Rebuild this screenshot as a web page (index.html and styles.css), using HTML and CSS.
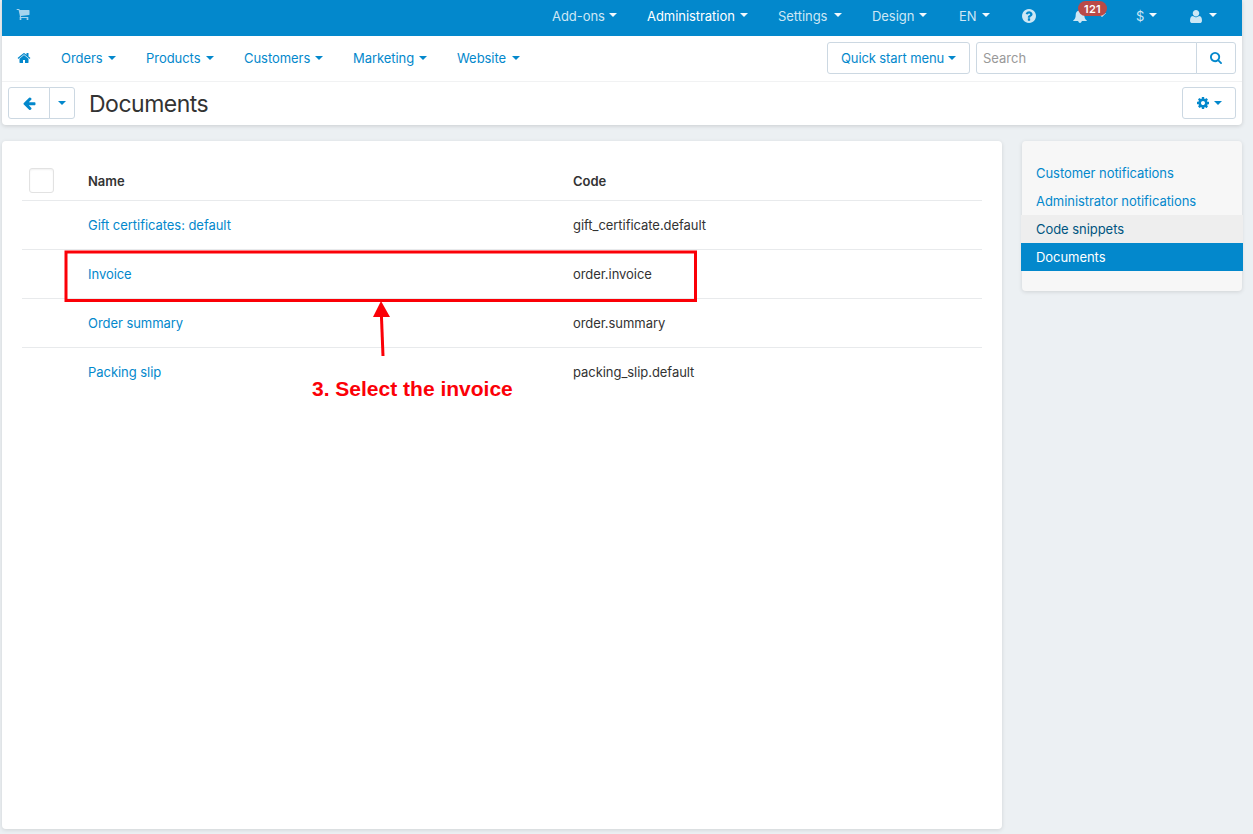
FILE: index.html
```html
<!DOCTYPE html>
<html lang="en">
<head>
    <meta charset="UTF-8">
    <meta name="viewport" content="width=device-width, initial-scale=1.0">
    <title>Documents</title>
    <link rel="stylesheet" href="styles.css">
</head>
<body>
    <header class="header">
        <div class="topbar">
            <a class="cart"><svg class="icon" viewBox="0 0 1792 1792"><path d="M704 1536q0 52-38 90t-90 38-90-38-38-90 38-90 90-38 90 38 38 90zm896 0q0 52-38 90t-90 38-90-38-38-90 38-90 90-38 90 38 38 90zm128-1088v512q0 24-16.5 42.5t-40.5 21.5l-1044 122q13 60 13 70 0 16-24 64h920q26 0 45 19t19 45-19 45-45 19h-1024q-26 0-45-19t-19-45q0-11 8-31.5t16-36 21.5-40 15.5-29.5l-177-823h-204q-26 0-45-19t-19-45 19-45 45-19h256q16 0 28.5 6.5t19.5 15.5 13 24.5 8 26 5.5 29.5 4.5 26h1201q26 0 45 19t19 45z"/></svg></a>
            <ul class="top-menu">
                <li class="w-addons">Add-ons <b class="caret"></b></li>
                <li class="w-admin active">Administration <b class="caret"></b></li>
                <li class="w-settings">Settings <b class="caret"></b></li>
                <li class="w-design">Design <b class="caret"></b></li>
                <li class="w-lang">EN <b class="caret"></b></li>
                <li class="w-help"><svg class="icon" viewBox="128 128 1536 1536"><path d="M1024 1376v-192q0-14-9-23t-23-9h-192q-14 0-23 9t-9 23v192q0 14 9 23t23 9h192q14 0 23-9t9-23zm256-672q0-88-55.5-163t-138.5-116-170-41q-243 0-371 213-15 24 8 42l132 100q7 6 19 6 16 0 25-12 53-68 86-92 34-24 86-24 48 0 85.5 26t37.5 59q0 38-20 61t-68 45q-63 28-115.5 86.5t-52.5 125.5v36q0 14 9 23t23 9h192q14 0 23-9t9-23q0-19 21.5-49.5t54.5-49.5q32-18 49-28.5t46-35 44.5-48 28-60.5 12.5-81zm384 192q0 209-103 385.5t-279.5 279.5-385.5 103-385.5-103-279.5-279.5-103-385.5 103-385.5 279.5-279.5 385.5-103 385.5 103 279.5 279.5 103 385.5z"/></svg></li>
                <li class="w-bell"><svg class="icon" viewBox="0 0 14 14"><path d="M7 0.3c.6 0 .9.4.9.9v.4c2.300.4 3.400 2.200 3.400 4.200 0 2.900.8 4.400 2.500 5.600v.7H.2v-.7C1.900 10.200 2.700 8.700 2.700 5.800c0-2 1.100-3.800 3.400-4.200v-.4c0-.5.3-.9.9-.9zM5.200 12.100h3.600c-.1 1.200-.8 1.800-1.800 1.800s-1.700-.6-1.800-1.800z"/></svg><b class="caret"></b><span class="badge">121</span></li>
                <li class="w-currency">$ <b class="caret"></b></li>
                <li class="w-user"><svg class="icon" viewBox="192 128 1408 1536"><path d="M1600 1405q0 120-73 189.500t-194 69.500h-874q-121 0-194-69.500t-73-189.500q0-53 3.500-103.500t14-109 26.500-108.500 43-97.500 62-81 85.500-53.500 111.500-20q9 0 42 21.500t74.500 48 108 48 133.500 21.500 133.500-21.500 108-48 74.500-48 42-21.500q61 0 111.500 20t85.500 53.500 62 81 43 97.500 26.500 108.500 14 109 3.500 103.500zm-320-893q0 159-112.500 271.500t-271.500 112.500-271.500-112.500-112.500-271.500 112.500-271.500 271.500-112.500 271.500 112.500 112.500 271.500z"/></svg> <b class="caret"></b></li>
            </ul>
        </div>

        <div class="navbar">
            <a class="home"><svg class="icon" viewBox="0 0 1792 1792"><path d="M1472 992v480q0 26-19 45t-45 19h-384v-384h-256v384h-384q-26 0-45-19t-19-45v-480q0-1 .5-3t.5-3l575-474 575 474q1 2 1 6zm223-69l-62 74q-8 9-21 11h-3q-13 0-21-7l-692-577-692 577q-12 8-24 7-13-2-21-11l-62-74q-8-10-7-23.500t11-21.500l719-599q32-26 76-26t76 26l244 204v-195q0-14 9-23t23-9h192q14 0 23 9t9 23v408l219 182q10 8 11 21.500t-7 23.500z"/></svg></a>
            <ul class="main-menu">
                <li class="w-orders">Orders <b class="caret"></b></li>
                <li class="w-products">Products <b class="caret"></b></li>
                <li class="w-customers">Customers <b class="caret"></b></li>
                <li class="w-marketing">Marketing <b class="caret"></b></li>
                <li class="w-website">Website <b class="caret"></b></li>
            </ul>
            <button class="btn quick-menu">Quick start menu <b class="caret"></b></button>
            <form class="search">
                <input type="text" placeholder="Search">
                <button type="button" class="btn"><svg class="icon" viewBox="64 128 1664 1664"><path d="M1216 832q0-185-131.500-316.500t-316.500-131.500-316.500 131.500-131.500 316.500 131.500 316.500 316.500 131.500 316.500-131.500 131.500-316.500zm512 832q0 52-38 90t-90 38q-54 0-90-38l-343-342q-179 124-399 124-143 0-273.500-55.500t-225-150-150-225-55.500-273.500 55.500-273.500 150-225 225-150 273.500-55.500 273.500 55.500 225 150 150 225 55.500 273.500q0 220-124 399l343 343q37 37 37 90z"/></svg></button>
            </form>
        </div>

        <div class="actions">
            <div class="btn-group">
                <button class="btn back"><svg class="icon" viewBox="128 128 1600 1600"><path d="M1664 896v128q0 53-32.500 90.500t-84.500 37.500h-704l293 294q38 36 38 90t-38 90l-75 76q-37 37-90 37-52 0-91-37l-651-652q-37-37-37-90 0-52 37-91l651-650q38-38 91-38 52 0 90 38l75 74q38 38 38 91t-38 91l-293 293h704q52 0 84.500 37.500t32.500 90.500z"/></svg></button>
                <button class="btn back-menu"><b class="caret"></b></button>
            </div>
            <h1>Documents</h1>
            <button class="btn gear"><svg class="icon" viewBox="128 128 1536 1536"><path d="M1152 896q0-106-75-181t-181-75-181 75-75 181 75 181 181 75 181-75 75-181zm512-109v222q0 12-8 23t-20 13l-185 28q-19 54-39 91 35 50 107 138 10 12 10 25t-9 23q-27 37-99 108t-94 71q-12 0-26-9l-138-108q-44 23-91 38-16 136-29 186-7 28-36 28h-222q-14 0-24.500-8.500t-11.500-21.500l-28-184q-49-16-90-37l-141 107q-10 9-25 9-14 0-25-11-126-114-165-168-7-10-7-23 0-12 8-23 15-21 51-66.500t54-70.500q-27-50-41-99l-183-27q-13-2-21-12.500t-8-23.500v-222q0-12 8-23t19-13l186-28q14-46 39-92-40-57-107-138-10-12-10-24 0-10 9-23 26-36 98.500-107.500t94.500-71.500q13 0 26 10l138 107q44-23 91-38 16-136 29-186 7-28 36-28h222q14 0 24.500 8.500t11.500 21.500l28 184q49 16 90 37l142-107q9-9 24-9 13 0 25 10 129 119 165 170 7 8 7 22 0 12-8 23-15 21-51 66.500t-54 70.500q26 50 41 98l183 28q13 2 21 12.500t8 23.500z"/></svg><b class="caret"></b></button>
        </div>
    </header>

    <div class="layout">
        <main class="content">
            <table class="table">
                <thead>
                    <tr>
                        <th class="check"><span class="checkbox"></span></th>
                        <th class="name">Name</th>
                        <th class="code">Code</th>
                    </tr>
                </thead>
                <tbody>
                    <tr><td></td><td><a>Gift certificates: default</a></td><td>gift_certificate.default</td></tr>
                    <tr><td></td><td><a>Invoice</a></td><td>order.invoice</td></tr>
                    <tr><td></td><td><a>Order summary</a></td><td>order.summary</td></tr>
                    <tr><td></td><td><a>Packing slip</a></td><td>packing_slip.default</td></tr>
                </tbody>
            </table>

            <!-- step 3 callout -->
            <svg class="highlight" viewBox="0 0 634 53"><rect x="2" y="2" width="629.500" height="48.500"/></svg>
            <svg class="arrow" viewBox="0 0 20 56"><path d="M8 0L17 16H0z"/><path d="M8.400 14L10 55" stroke="#fb0007" stroke-width="3"/></svg>
            <div class="callout">3. Select the invoice</div>
        </main>

        <aside class="sidebar">
            <ul>
                <li>Customer notifications</li>
                <li>Administrator notifications</li>
                <li class="hover">Code snippets</li>
                <li class="active">Documents</li>
            </ul>
        </aside>
    </div>
</body>
</html>
```
FILE: styles.css
```css
* {
    box-sizing: border-box;
}

body {
    margin: 0;
    padding: 0 11px 5px 2px;
    height: 834px;
    overflow: hidden;
    display: flex;
    flex-direction: column;
    background: #ecf0f3;
    color: #333;
    font-family: Inter, "Liberation Sans", sans-serif;
    font-size: 13px;
    letter-spacing: -0.05px;
    line-height: 20px;
}

ul {
    list-style: none;
    margin: 0;
    padding: 0;
}

.icon {
    display: block;
    width: 14px;
    height: 14px;
    fill: currentColor;
}

.caret {
    display: block;
    flex: none;
    border: 4px solid transparent;
    border-top-color: currentColor;
    border-bottom: 0;
}

/* Header */
.header {
    flex: none;
    height: 125px;
    background: #fff;
    border-radius: 0 0 4px 4px;
    box-shadow: 0 1px 4px rgba(0, 0, 0, 0.15);
}

.topbar {
    display: flex;
    justify-content: space-between;
    height: 36px;
    padding: 0 25px 0 14px;
    background: #0388cc;
    color: #cde7f5;
}

.cart {
    padding-top: 7px;
    color: #a5d4ed;
}

.top-menu {
    display: flex;
    height: 32px;
}

.top-menu li,
.main-menu li {
    display: flex;
    align-items: center;
    justify-content: space-between;
    position: relative;
    white-space: nowrap;
}

.top-menu .caret {
    color: #f2f9fd;
    margin-bottom: 2px;
}

.top-menu .active {
    color: #fff;
}

.w-addons { width: 65px; }
.w-admin { width: 101px; margin-left: 30px; }
.w-settings { width: 64px; margin-left: 30px; }
.w-design { width: 55px; margin-left: 30px; }
.w-lang { width: 31px; margin-left: 32px; }
.w-help { width: 14px; margin-left: 32px; }
.w-bell { width: 33px; margin-left: 37px; }
.w-currency { width: 21px; margin-left: 30px; }
.w-user { width: 27px; margin-left: 33px; }

.w-user .icon {
    width: 12px;
    height: 13px;
}

.badge {
    position: absolute;
    top: 1px;
    left: 5px;
    width: 29px;
    height: 15px;
    border-radius: 8px;
    background: #b94a48;
    color: #fff;
    font-size: 11px;
    font-weight: 600;
    letter-spacing: 0.3px;
    line-height: 16px;
    text-align: center;
}

.navbar {
    display: flex;
    align-items: center;
    height: 46px;
    padding: 0 6px 2px 15px;
    border-bottom: 1px solid #f1f2f3;
    color: #0388cc;
}

.main-menu {
    display: flex;
    flex: 1;
    margin-left: 30px;
}

.main-menu .caret {
    margin-top: 1px;
}

.w-orders { width: 55px; }
.w-products { width: 68px; margin-left: 30px; }
.w-customers { width: 79px; margin-left: 30px; }
.w-marketing { width: 74px; margin-left: 30px; }
.w-website { width: 63px; margin-left: 30px; }

.btn {
    display: flex;
    align-items: center;
    justify-content: center;
    height: 32px;
    margin: 0;
    padding: 0;
    border: 1px solid #ccd8e2;
    border-radius: 3px;
    background: #fff;
    color: #0388cc;
    font: inherit;
}

.quick-menu {
    width: 143px;
    padding: 0 13px;
    justify-content: space-between;
    letter-spacing: -0.11px;
    white-space: nowrap;
}

.search {
    display: flex;
    width: 260px;
    margin-left: 6px;
}

.search input {
    width: 221px;
    height: 32px;
    padding: 0 6px;
    border: 1px solid #ccd8e2;
    border-radius: 3px 0 0 3px;
    font: inherit;
}

.search input::placeholder {
    color: #999;
}

.search .btn {
    width: 40px;
    margin-left: -1px;
    border-radius: 0 3px 3px 0;
}

.search .icon {
    width: 12px;
    height: 12px;
}

.actions {
    display: flex;
    align-items: center;
    height: 42px;
    padding: 0 6px;
}

.btn-group {
    display: flex;
}

.back {
    width: 42px;
    border-radius: 3px 0 0 3px;
}

.back .icon {
    width: 13px;
    height: 13px;
}

.back-menu {
    width: 26px;
    margin-left: -1px;
    border-radius: 0 3px 3px 0;
}

h1 {
    flex: 1;
    margin: 1px 0 0 14px;
    font-size: 23px;
    font-weight: 400;
    letter-spacing: -0.5px;
    line-height: 30px;
}

.gear {
    width: 54px;
    gap: 5px;
}

.gear .icon {
    width: 12px;
    height: 12px;
}

/* Page */
.layout {
    display: flex;
    align-items: flex-start;
    justify-content: space-between;
    flex: 1;
    margin-top: 16px;
}

.content {
    position: relative;
    align-self: stretch;
    width: 1000px;
    padding: 20px;
    background: #fff;
    border-radius: 4px;
    box-shadow: 0 1px 4px rgba(0, 0, 0, 0.12);
}

.table {
    width: 960px;
    table-layout: fixed;
    border-collapse: collapse;
}

.table th,
.table td {
    height: 49px;
    padding: 0;
    border-top: 1px solid #e8eaec;
    text-align: left;
}

.table th {
    height: 39px;
    border: 0;
    font-weight: 600;
}

.table a {
    color: #0388cc;
}

.check {
    width: 66px;
}

.name {
    width: 485px;
}

.table .name,
.table .code {
    padding-top: 2px;
}

.checkbox {
    display: block;
    width: 25px;
    height: 25px;
    margin-left: 7px;
    border: 1px solid #e2e2e2;
    border-radius: 3px;
    box-shadow: inset 0 1px 2px rgba(0, 0, 0, 0.06);
}

.highlight {
    position: absolute;
    left: 62px;
    top: 109px;
    width: 634px;
    height: 53px;
    fill: none;
    stroke: #fb0007;
    stroke-width: 3;
}

.arrow {
    position: absolute;
    left: 371px;
    top: 160px;
    width: 20px;
    height: 56px;
    fill: #fb0007;
}

.callout {
    position: absolute;
    left: 310px;
    top: 235px;
    color: #fb0007;
    font-family: "Liberation Sans", Arial, sans-serif;
    font-size: 21px;
    font-weight: bold;
    letter-spacing: 0;
    line-height: 25px;
    white-space: nowrap;
}

.sidebar {
    width: 220px;
    height: 150px;
    padding-top: 18px;
    background: #f7f7f7;
    border-radius: 4px;
    box-shadow: 0 1px 4px rgba(0, 0, 0, 0.12);
}

.sidebar li {
    height: 28px;
    margin: 0 -1px;
    padding: 0 15px;
    color: #0388cc;
    line-height: 29px;
}

.sidebar .hover {
    background: #eee;
    color: #005580;
}

.sidebar .active {
    background: #0388cc;
    color: #fff;
}
```
